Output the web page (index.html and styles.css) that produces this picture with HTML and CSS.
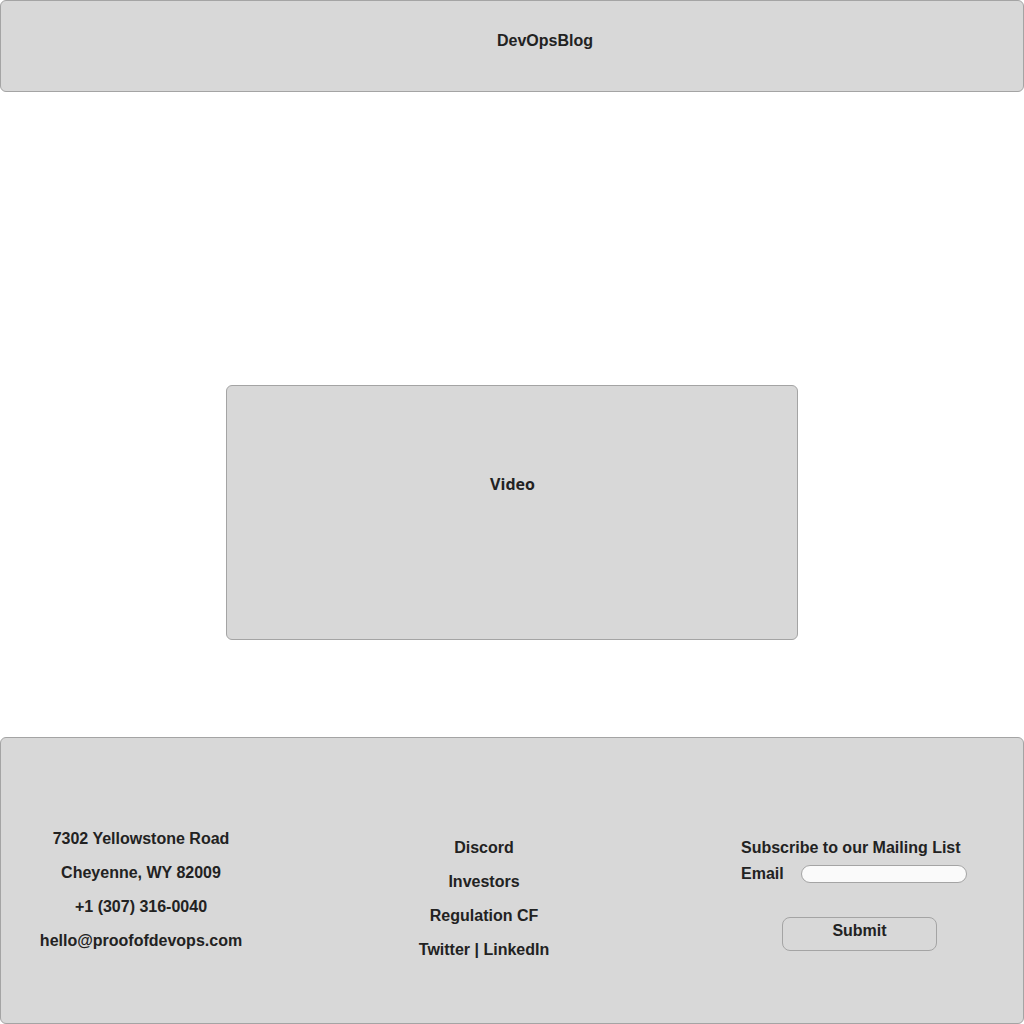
FILE: index.html
```html
<!DOCTYPE html>
<html lang="en">
  <head>
    <meta charset="UTF-8" />
    <meta name="viewport" content="width=device-width, initial-scale=1.0" />
    <title>DevOpsBlog</title>
    <link rel="stylesheet" href="styles.css">
  </head>
  <body>
    <header class="topbar">
      <div class="brand">DevOpsBlog</div>
    </header>

    <main class="content">
      <div class="video">Video</div>
    </main>

    <footer class="footer">
      <div class="contact">
        <p>7302 Yellowstone Road</p>
        <p>Cheyenne, WY 82009</p>
        <p>+1 (307) 316-0040</p>
        <p>hello@proofofdevops.com</p>
      </div>
      <div class="links">
        <p>Discord</p>
        <p>Investors</p>
        <p>Regulation CF</p>
        <p>Twitter | LinkedIn</p>
      </div>
      <form class="subscribe">
        <div class="subscribe_title">Subscribe to our Mailing List</div>
        <div class="email_row">
          <label for="email">Email</label>
          <input type="text" id="email" class="email_input">
        </div>
        <button type="button" class="submit_btn">Submit</button>
      </form>
    </footer>
  </body>
</html>
```

FILE: styles.css
```css
body {
  margin: 0;
  background: #ffffff;
  font-family: "Liberation Sans", Arial, sans-serif;
  font-weight: bold;
  font-size: 16px;
  color: #222222;
}
.topbar {
  height: 90px;
  background: #d8d8d8;
  border: 1px solid #a4a4a4;
  border-radius: 6px;
  display: flex;
  justify-content: center;
}
.brand {
  padding-top: 31px;
  padding-left: 66px;
  line-height: 18px;
}
.content {
  display: flex;
  justify-content: center;
  padding-top: 293px;
  padding-bottom: 97px;
}
.video {
  width: 569px;
  background: #d8d8d8;
  border: 1px solid #a4a4a4;
  border-radius: 6px;
  text-align: center;
  font-family: "Open Sans", sans-serif;
  line-height: 20px;
  padding-top: 88px;
  padding-left: 1px;
  height: 165px;
  box-sizing: content-box;
}
.footer {
  height: 285px;
  background: #d8d8d8;
  border: 1px solid #a4a4a4;
  border-radius: 6px;
  display: grid;
  grid-template-columns: 280px 406px 1fr;
}
.footer p {
  margin: 0;
  line-height: 34px;
}
.contact {
  text-align: center;
  padding-top: 84px;
}
.links {
  text-align: center;
  padding-top: 93px;
}
.subscribe {
  padding-top: 100px;
  padding-left: 54px;
  margin: 0;
}
.subscribe_title {
  line-height: 20px;
}
.email_row {
  display: flex;
  align-items: center;
  gap: 17px;
  margin-top: 7px;
  height: 18px;
}
.email_input {
  width: 164px;
  height: 16px;
  padding: 0;
  border: 1px solid #a4a4a4;
  border-radius: 9px;
  background: #fafafa;
  box-sizing: content-box;
}
.submit_btn {
  display: block;
  margin-top: 34px;
  margin-left: 41px;
  width: 155px;
  height: 34px;
  background: #d8d8d8;
  border: 1px solid #a4a4a4;
  border-radius: 8px;
  font-family: "Liberation Sans", Arial, sans-serif;
  font-weight: bold;
  font-size: 16px;
  color: #222222;
  padding: 0 0 6px 0;
}
```
